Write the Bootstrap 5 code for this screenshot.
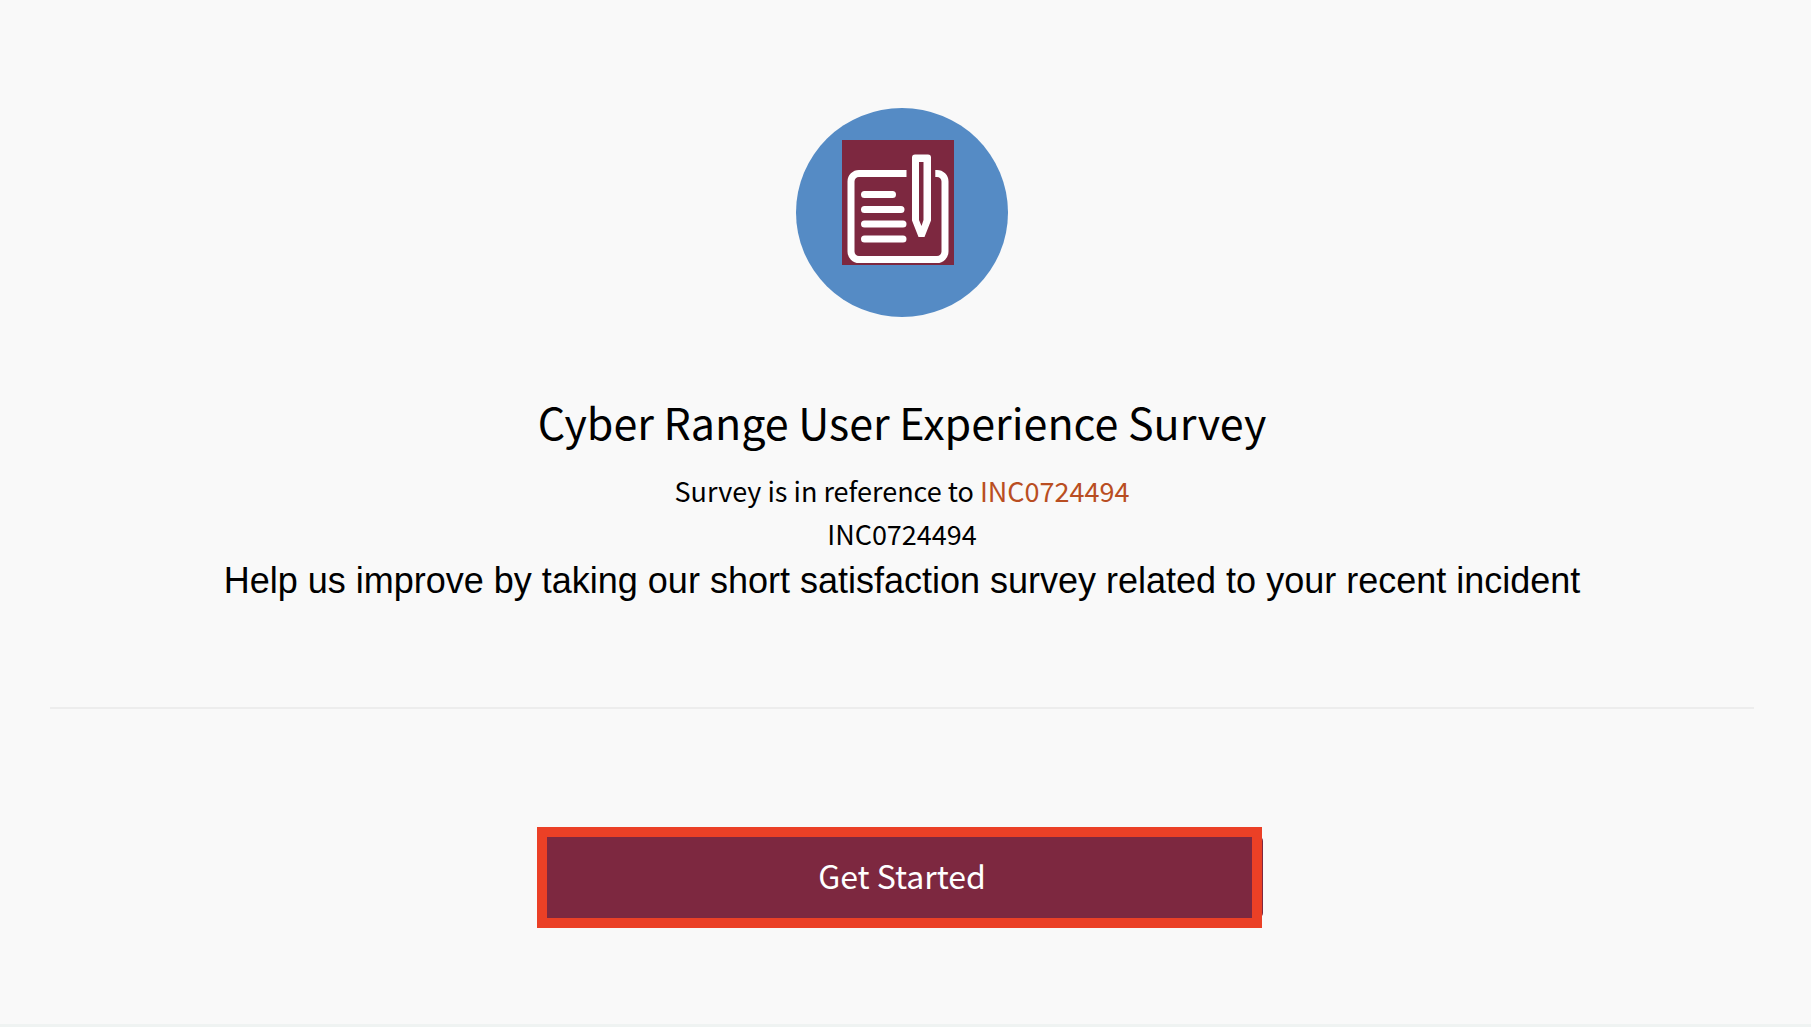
<!DOCTYPE html>
<html lang="en">
<head>
<meta charset="utf-8">
<meta name="viewport" content="width=device-width, initial-scale=1">
<title>Cyber Range User Experience Survey</title>
<link href="https://cdn.jsdelivr.net/npm/bootstrap@5.3.0/dist/css/bootstrap.min.css" rel="stylesheet">
<style>
  body { background: #f9f9f9; color: #000; font-family: "Noto Sans CJK SC", "Open Sans", sans-serif; font-size: 27px; line-height: 43px; }
  .survey-page { padding: 108px 57px 48px 50px; }
  .survey-emblem { width: 212px; height: 209px; margin-bottom: 76px; }
  .survey-title { font-size: 43px; line-height: 56px; font-weight: 400; margin-bottom: 20px; }
  .incident-link { color: #b94e22; }
  .survey-intro { font-family: "Liberation Sans", Arial, sans-serif; font-size: 36px; line-height: 52px; }
  .survey-rule { height: 2px; background: #ededed; border: 0; opacity: 1; margin: 100px 0 127px; }
  .start-wrap { max-width: 722px; }
  .btn-start { --bs-btn-color: #fff; --bs-btn-bg: #7d2840; --bs-btn-hover-color: #fff; --bs-btn-hover-bg: #6a2035; --bs-btn-active-color: #fff; --bs-btn-active-bg: #6a2035; --bs-btn-border-width: 0; --bs-btn-padding-y: 0; --bs-btn-font-size: 32px; --bs-btn-line-height: 79px; --bs-btn-border-radius: 5px; padding-bottom: 3px; }
  .start-highlight { inset: -9px 1px -10px -4px; border: 10px solid #eb4026; pointer-events: none; }
  .page-end { height: 3px; background: #eff3f2; }
</style>
</head>
<body class="d-flex flex-column min-vh-100">
<main class="survey-page d-flex flex-column align-items-center text-center">
  <svg class="survey-emblem" viewBox="0 0 212 209" role="img" aria-label="Survey form and pencil">
    <ellipse cx="106" cy="104.500" rx="106" ry="104.500" fill="#558bc5"/>
    <rect x="46" y="32" width="112" height="125" fill="#7d2840"/>
    <g fill="none" stroke="#fff" stroke-width="7">
      <path d="M110.500 65.500H63a8 8 0 0 0-8 8V143.500a8 8 0 0 0 8 8H141a8 8 0 0 0 8-8V73.500a8 8 0 0 0-8-8H139.300"/>
      <path stroke-linecap="round" d="M68.500 86.500H96.500M68.500 101.500H105M68.500 116H107M68.500 131H107"/>
    </g>
    <path fill="#fff" fill-rule="evenodd" d="M119 46.500H132Q135 46.500 135 49.500V112.500L128.500 129H122.500L116 112.500V49.500Q116 46.500 119 46.500ZM123 54V112L125.500 118L127.500 112V54Z"/>
  </svg>
  <h1 class="survey-title">Cyber Range User Experience Survey</h1>
  <div>Survey is in reference to <a class="incident-link text-decoration-none" href="#">INC0724494</a></div>
  <div>INC0724494</div>
  <p class="survey-intro mb-0">Help us improve by taking our short satisfaction survey related to your recent incident</p>
  <hr class="survey-rule w-100">
  <div class="start-wrap position-relative w-100">
    <button type="button" class="btn btn-start d-block w-100">Get Started</button>
    <div class="start-highlight position-absolute" aria-hidden="true"></div>
  </div>
</main>
<footer class="page-end mt-auto"></footer>
<script src="https://cdn.jsdelivr.net/npm/bootstrap@5.3.0/dist/js/bootstrap.bundle.min.js"></script>
</body>
</html>
